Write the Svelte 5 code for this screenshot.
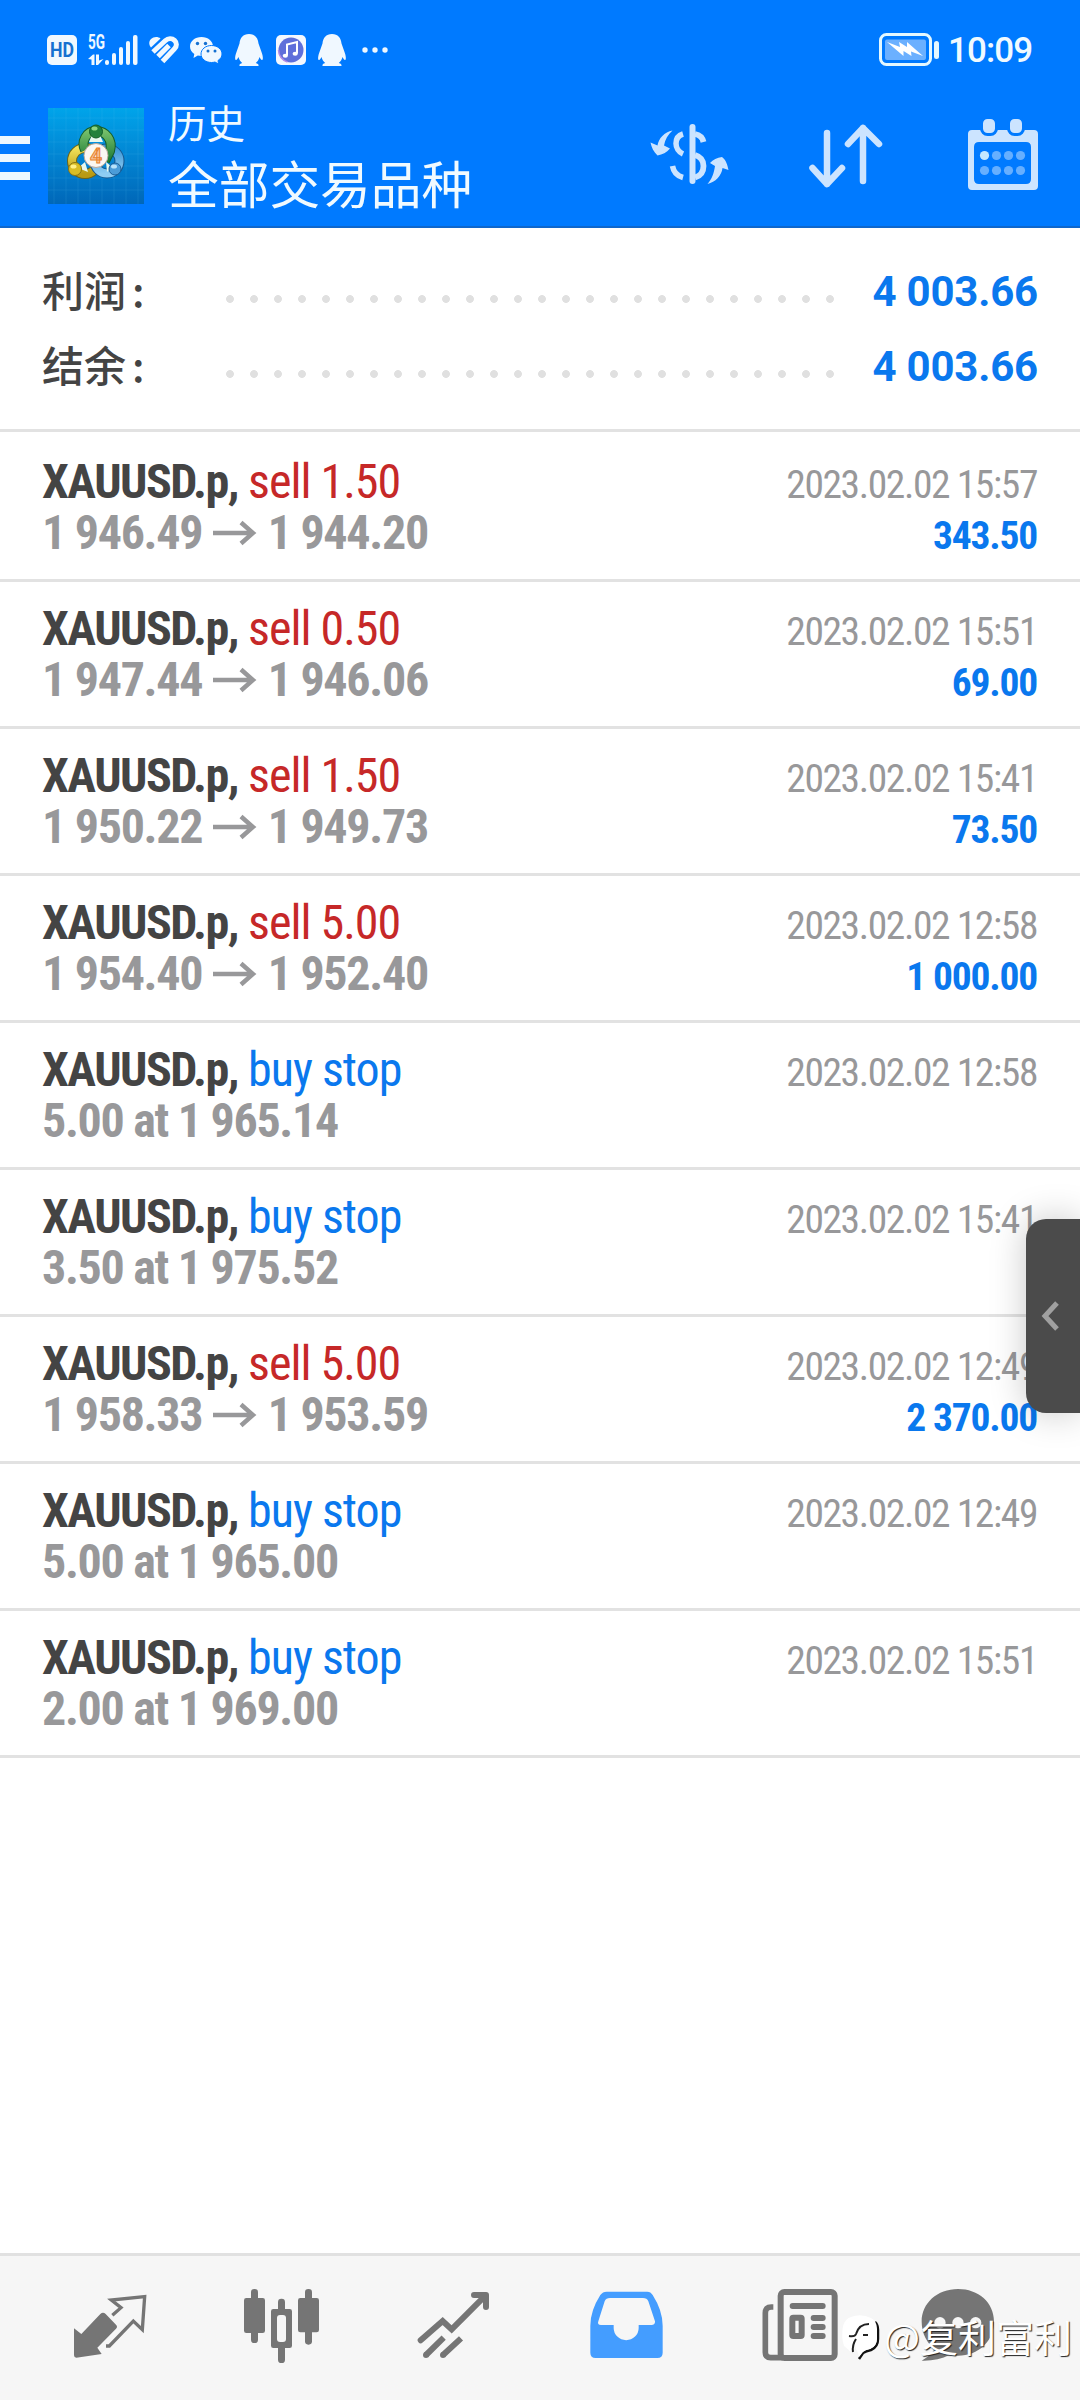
<script>
  const summary = [
    { label: '利润', value: '4 003.66' },
    { label: '结余', value: '4 003.66' }
  ];

  const deals = [
    { type: 'sell', volume: '1.50', open: '1 946.49', close: '1 944.20', time: '2023.02.02 15:57', profit: '343.50' },
    { type: 'sell', volume: '0.50', open: '1 947.44', close: '1 946.06', time: '2023.02.02 15:51', profit: '69.00' },
    { type: 'sell', volume: '1.50', open: '1 950.22', close: '1 949.73', time: '2023.02.02 15:41', profit: '73.50' },
    { type: 'sell', volume: '5.00', open: '1 954.40', close: '1 952.40', time: '2023.02.02 12:58', profit: '1 000.00' },
    { type: 'buy stop', detail: '5.00 at 1 965.14', time: '2023.02.02 12:58' },
    { type: 'buy stop', detail: '3.50 at 1 975.52', time: '2023.02.02 15:41' },
    { type: 'sell', volume: '5.00', open: '1 958.33', close: '1 953.59', time: '2023.02.02 12:49', profit: '2 370.00' },
    { type: 'buy stop', detail: '5.00 at 1 965.00', time: '2023.02.02 12:49' },
    { type: 'buy stop', detail: '2.00 at 1 969.00', time: '2023.02.02 15:51' }
  ];
</script>

{#snippet penguin()}
  <svg class="penguin" width="28" height="34" viewBox="0 0 28 34" fill="#f0f8ff">
    <path d="M14 1c-6 0-9 4-9.500 9.500L1.500 19C0 23-.3 26.500.800 27c.9.300 2-1.500 2.700-3 .6 2.500 2 4.500 3.700 6-2 .6-3 1.300-2.700 3h19c.3-1.700-.7-2.400-2.700-3 1.700-1.500 3.100-3.500 3.700-6 .7 1.500 1.800 3.300 2.700 3 1.100-.5.800-4-.7-8l-3-8.500C23 5 20 1 14 1z" />
  </svg>
{/snippet}

<div class="screen">
  <header>
    <div class="status">
      <svg class="hd" width="30" height="30" viewBox="0 0 30 30">
        <rect width="30" height="30" rx="5" fill="#f0f8ff" />
        <text x="15" y="21.500" text-anchor="middle" textLength="24" lengthAdjust="spacingAndGlyphs">HD</text>
      </svg>
      <svg class="signal" width="50" height="34" viewBox="0 0 50 34" fill="#f0f8ff">
        <text x="0" y="16" textLength="17" lengthAdjust="spacingAndGlyphs">5G</text>
        <path d="M0 26l5-4.500h1.500V32H3.500v-5.500zM8 21.500h3v6l4.500-1.500-5.500 6H8z" />
        <rect x="17" y="27" width="4" height="5" rx="2" />
        <rect x="24" y="20" width="4" height="12" rx="2" />
        <rect x="31" y="14" width="4" height="18" rx="2" />
        <rect x="38" y="8" width="4" height="24" rx="2" />
        <rect x="45" y="2" width="4.500" height="30" rx="2" />
      </svg>
      <svg class="health" width="32" height="28" viewBox="0 0 32 28" fill="none" stroke="#f0f8ff">
        <path d="M3 11.500L12.500 2.500C10 .3 5.500.5 3 3S.8 9 3 11.500z" fill="#f0f8ff" stroke="none" />
        <path d="M5 16L17.500 4.500c2.500-2.300 6.500-2.500 9-.2s2.500 6 0 8.500L14.500 25.500M10 20.500l11-11" stroke-width="5" />
      </svg>
      <svg class="wechat" width="32" height="28" viewBox="0 0 32 28">
        <path d="M11.500 1C5 1 0 5.200 0 10.500c0 3 1.700 5.800 4.300 7.500L3.500 22l4.300-2.500c1.200.3 2.400.5 3.700.5C18 20 23 15.800 23 10.500S18 1 11.500 1z" fill="#f0f8ff" />
        <path d="M21.500 9.500C15.500 9.500 11 13.300 11 18s4.500 8.500 10.500 8.500c1.200 0 2.500-.2 3.500-.5l3.500 2-.5-3.500c2.500-1.500 4-3.800 4-6.500 0-4.700-4.500-8.500-10.500-8.500z" fill="#f0f8ff" stroke="#007aff" />
        <g fill="#1670d0">
          <circle cx="7.500" cy="7.500" r="1.700" /><circle cx="15.500" cy="7.500" r="1.700" />
          <circle cx="18" cy="15" r="1.500" /><circle cx="25" cy="15" r="1.500" />
        </g>
      </svg>
      {@render penguin()}
      <svg class="music" width="30" height="30" viewBox="0 0 30 30">
        <rect width="30" height="30" rx="5" fill="#f4f8ff" />
        <circle cx="15" cy="15" r="12.500" fill="#5f6fda" />
        <path d="M2.500 15a12.500 12.500 0 0 0 9 12" fill="none" stroke="#b08be6" stroke-width="1.500" />
        <path d="M11 20.500V9.500l10-2.500v11.500" fill="none" stroke="#fff" stroke-width="2" />
        <ellipse cx="9.300" cy="20.800" rx="2.600" ry="2" fill="#fff" /><ellipse cx="19.200" cy="18.800" rx="2.600" ry="2" fill="#fff" />
      </svg>
      {@render penguin()}
      <svg class="more" width="28" height="8" viewBox="0 0 28 8" fill="#f0f8ff">
        <circle cx="4" cy="4" r="2.700" /><circle cx="14" cy="4" r="2.700" /><circle cx="24" cy="4" r="2.700" />
      </svg>
      <svg class="battery" width="62" height="34" viewBox="0 0 62 34">
        <rect x="1.500" y="1.500" width="50" height="30" rx="6" fill="none" stroke="#e4f8ff" stroke-width="3" />
        <rect x="6" y="6.500" width="41" height="20.500" rx="2" fill="#6bb0ff" />
        <path d="M8 9l13 5-1-5 8 5V9l16 14-12-4.500.5 4.500-8-5v5z" fill="#fff" />
        <rect x="55" y="8" width="5" height="18" rx="2.500" fill="#e4f8ff" />
      </svg>
      <span class="clock">10:09</span>
    </div>

    <div class="toolbar">
      <svg class="menu" width="30" height="44" viewBox="0 0 30 44" fill="#ecf8ff">
        <rect width="30" height="8" /><rect y="18" width="30" height="8" /><rect y="36" width="30" height="8" />
      </svg>
      <svg class="logo" width="96" height="96" viewBox="0 0 96 96">
        <defs>
          <linearGradient id="sky" x1="0" y1="0" x2="0" y2="1">
            <stop offset="0" stop-color="#00a4ea" /><stop offset=".5" stop-color="#0285d3" /><stop offset="1" stop-color="#0067b8" />
          </linearGradient>
          <linearGradient id="green" x1="0" y1="0" x2="0" y2="1">
            <stop offset="0" stop-color="#76c06a" /><stop offset="1" stop-color="#1d7a35" />
          </linearGradient>
          <linearGradient id="gold" x1="0" y1="0" x2="0" y2="1">
            <stop offset="0" stop-color="#f2e25a" /><stop offset="1" stop-color="#b99a12" />
          </linearGradient>
          <linearGradient id="azure" x1="0" y1="0" x2="0" y2="1">
            <stop offset="0" stop-color="#3c97d6" /><stop offset="1" stop-color="#8fcdf3" />
          </linearGradient>
        </defs>
        <rect width="96" height="96" fill="url(#sky)" />
        <path d="M6 0v96M18 0v96M30 0v96M42 0v96M54 0v96M66 0v96M78 0v96M90 0v96M0 10h96M0 22h96M0 34h96M0 46h96M0 58h96M0 70h96M0 82h96" stroke="#5cc0f0" stroke-width=".6" opacity=".25" />
        <g fill="none">
          <circle cx="37" cy="53" r="13" stroke="#6f6414" stroke-width="10" />
          <circle cx="37" cy="53" r="13" stroke="url(#gold)" stroke-width="8" />
          <circle cx="59" cy="53" r="12.500" stroke="#15568d" stroke-width="10" />
          <circle cx="59" cy="53" r="12.500" stroke="url(#azure)" stroke-width="8" />
          <path d="M37 42C33 34 38 23 48 23s17 9 14 20l-5 10" stroke="#145c28" stroke-width="10" />
          <path d="M37 42C33 34 38 23 48 23s17 9 14 20l-5 10" stroke="url(#green)" stroke-width="8" />
        </g>
        <path d="M41 34l3-7h8l3 7zM30 60l7-6 3 10zM58 54l6 5-5 5z" fill="#e8f8ee" />
        <circle cx="48" cy="23.500" r="6.500" fill="#24803c" stroke="#145c28" />
        <ellipse cx="46.500" cy="20.500" rx="3" ry="2" fill="#8fd480" />
        <circle cx="27" cy="61" r="6.500" fill="#d9bd24" stroke="#877316" />
        <ellipse cx="25.500" cy="58.500" rx="3" ry="2" fill="#fff087" />
        <circle cx="67" cy="61" r="6" fill="#4b9cd8" stroke="#1a5d96" />
        <ellipse cx="66" cy="58.500" rx="3" ry="2" fill="#b8e2fa" />
        <circle cx="48" cy="47.500" r="12" fill="#fbf7f2" stroke="#b9a79b" />
        <text x="48" y="55" text-anchor="middle">4</text>
      </svg>
      <div class="titles">
        <div class="title">历史</div>
        <div class="subtitle">全部交易品种</div>
      </div>
      <svg class="currency" width="80" height="64" viewBox="0 0 80 64" fill="none" stroke="#cce4ff">
        <path d="M23.500 8.500c-8 1.500-14 8-15 15l-7-3c1 5 3 9 7 13 5-1 9-3 12.500-7l-6-3c1-6 4-11 8.500-15zM58.500 62c8-2 14-8 15-16l6 2c-1-5-2.500-10-6.500-13-5 .5-9 2.500-12 6l5 3c-1 7-3 13-7.500 18z" fill="#cce4ff" stroke="none" />
        <path d="M43.500 5v54" stroke-width="6" stroke-linecap="round" />
        <path d="M34 12c-5 1.500-7 5.500-7 9.500s2.500 8.500 7 10.500M23.500 44c1 6 5 10 10.500 11.500" stroke-width="5.500" />
        <path d="M46 12c4.500.8 7.500 3.500 8.500 8M46 33c5 1.500 8.500 5 8.500 11S51 54 46 55.500" stroke-width="5.800" />
      </svg>
      <svg class="sort" width="76" height="68" viewBox="0 0 76 68" fill="none" stroke="#cce4ff" stroke-width="6.500" stroke-linecap="round" stroke-linejoin="round">
        <path d="M20 13v51M5.500 48L20 64l15-16M56 61V8M41 24L56 8l16 16" />
      </svg>
      <svg class="calendar" width="70" height="72" viewBox="0 0 70 72">
        <path d="M4 11h62q4 0 4 4v52q0 4-4 4H4q-4 0-4-4V15q0-4 4-4zM11 23q-5 0-5 5v32q0 5 5 5h47q5 0 5-5V28q0-5-5-5z" fill="#cce4ff" fill-rule="evenodd" />
        <g fill="#cce4ff" stroke="#007aff" stroke-width="3">
          <rect x="13.500" y="-1.500" width="15" height="17" rx="6" /><rect x="40.500" y="-1.500" width="15" height="17" rx="6" />
        </g>
        {#each [36.5, 51.5] as cy}
          {#each [16.5, 28.5, 40.5, 52.5] as cx}
            <circle {cx} {cy} r="4.600" fill={cx < 20 && cy < 40 ? '#c4e8ff' : '#66afff'} />
          {/each}
        {/each}
      </svg>
    </div>
  </header>

  <section class="summary">
    {#each summary as item}
      <div class="total">
        <span class="label">{item.label}<span class="colon">:</span></span>
        <span class="leader"></span>
        <span class="value">{item.value}</span>
      </div>
    {/each}
  </section>

  <ul class="deals">
    {#each deals as deal}
      <li>
        <div class="line">
          <span class="symbol"><b>XAUUSD.p,</b> <span class:sell={deal.type === 'sell'} class:buy={deal.type !== 'sell'}>{deal.type} {deal.volume ?? ''}</span></span>
          <span class="time">{deal.time}</span>
        </div>
        <div class="line">
          {#if deal.detail}
            <span class="price">{deal.detail}</span>
          {:else}
            <span class="price">
              {deal.open}
              <svg class="arrow" width="43" height="24" viewBox="0 0 43 24" fill="none" stroke="#98989a" stroke-width="4.500">
                <path d="M0 12h40M28 1.500L40 12 28 22.500" />
              </svg>
              {deal.close}
            </span>
            <span class="profit">{deal.profit}</span>
          {/if}
        </div>
      </li>
    {/each}
  </ul>

  <nav>
    <svg viewBox="72 48 516 432" fill="#757575">
      <path d="M222 265l22 17 57-60q8-7 16 0l31 32q6 6 0 12l-56 57 13 19-76 11q-7 0-7-7z" />
      <path d="M318 318h10l72-75 27 26 7-99-100 10 29 23-26 23" fill="none" stroke="#757575" stroke-width="10" />
    </svg>
    <svg viewBox="588 48 516 432" fill="#757575">
      <rect x="732" y="174" width="63" height="105" rx="7" /><rect x="753" y="147" width="21" height="162" rx="10" />
      <rect x="894" y="174" width="63" height="103" rx="7" /><rect x="915" y="147" width="21" height="167" rx="10" />
      <rect x="813" y="207" width="63" height="117" rx="7" /><rect x="834" y="176" width="21" height="193" rx="10" />
      <rect x="831" y="225" width="27" height="81" rx="9" fill="#f6f6f6" />
    </svg>
    <svg viewBox="24 48 516 432" fill="none" stroke="#757575" stroke-width="18">
      <path d="M182 301l66-58 27 25L376 167" stroke-linecap="round" />
      <path d="M342 165h36v36" stroke-linecap="round" stroke-linejoin="round" />
      <path d="M198 345l53-52M249 345l54-50" /><g fill="#757575" stroke="none"><circle cx="198" cy="345" r="9" /><circle cx="249" cy="345" r="9" /></g>
    </svg>
    <svg viewBox="540 48 516 432">
      <path d="M740 155h122q10 0 16 10 30 47 30 92v81q0 16-16 16H707q-16 0-16-16v-81q0-45 30-92 7-10 19-10zM750 174q-12 0-16 10l-19 60q-4 11 8 11h38v9a37 36 0 0 0 75 0v-9h38q12 0 11-11l-20-60q-4-10-16-10z" fill="#449dff" fill-rule="evenodd" />
    </svg>
    <svg viewBox="-24 48 516 432" fill="none" stroke="#757575" stroke-width="18">
      <rect x="182" y="156" width="162" height="198" rx="11" />
      <path d="M160 201h-6q-18 0-18 18v118q0 16 16 16h36" stroke-width="17" />
      <path d="M218 198h90M281 234h27M281 261h27M281 288h27" stroke-linecap="round" />
      <rect x="217" y="233" width="28" height="55" rx="3" />
    </svg>
    <svg viewBox="492 48 516 432">
      <path d="M714 147c-62 0-109 42-109 98 0 38 18 65 38 83-8 15-20 24-38 34 31 1 60-5 83-17 9 2 17 2 26 2 61 0 108-44 108-102s-47-98-108-98z" fill="#757575" />
      <g fill="#f6f6f6"><circle cx="660" cy="248" r="17" /><circle cx="714" cy="248" r="17" /><circle cx="767" cy="248" r="17" /></g>
    </svg>
  </nav>

  <div class="handle">
    <svg width="18" height="30" viewBox="0 0 18 30" fill="none" stroke="#a0a0a0" stroke-width="5">
      <path d="M16 2L4 15l12 13" />
    </svg>
  </div>

  <div class="watermark">
    <svg width="38" height="46" viewBox="0 0 38 46">
      <path d="M33 7q3 3 3 8v9q0 8-7 11-5 1-8 3l-4 6" fill="none" stroke="#111" stroke-width="2.500" />
      <path d="M9 2q10-4 20 1q6 3 6 11v10q0 7-7 10-5 1-7 3l-4 5q-1-5-3-8l-1-5-4 8-7-6Q-1 22 1 11q2-7 8-9z" fill="#fff" />
      <path d="M7 21q6 1 7-2 3-10 13-10M21 20h5M14 24q-4 6-3 13" fill="none" stroke="#222" stroke-width="2" />
    </svg>
    <span>@复利富利</span>
  </div>
</div>

<style>
  :global(body) {
    margin: 0;
    background: #fff;
  }

  .screen {
    position: relative;
    display: flex;
    flex-direction: column;
    width: 1080px;
    height: 2400px;
    overflow: hidden;
    background: #fff;
    font-family: "Roboto Condensed", Roboto, "Noto Sans CJK SC", sans-serif;
    font-stretch: 75%;
  }

  svg {
    display: block;
    flex: none;
    overflow: visible;
  }

  header {
    box-sizing: border-box;
    height: 228px;
    border-bottom: 2px solid #0f67cc;
    background: #007aff;
    color: #f0faff;
  }

  .status {
    display: flex;
    align-items: center;
    height: 100px;
    padding-left: 47px;
  }

  .hd text {
    font: bold 20px Roboto, sans-serif;
    fill: #1670d0;
  }

  .signal {
    margin-left: 11px;
  }

  .signal text {
    font: bold 20px Roboto, sans-serif;
  }

  .health {
    margin-left: 10px;
  }

  .wechat {
    margin-left: 10px;
  }

  .penguin {
    margin-left: 12.5px;
  }

  .music {
    margin-left: 13px;
  }

  .more {
    margin-left: 15px;
  }

  .battery {
    margin-left: 490px;
  }

  .clock {
    margin-left: 7px;
    font: 500 35px/1 Roboto, sans-serif;
    letter-spacing: -0.9px;
  }

  .toolbar {
    display: flex;
    align-items: flex-start;
    height: 126px;
  }

  .menu {
    margin-top: 36px;
  }

  .logo {
    margin: 8px 0 0 18px;
  }

  .logo text {
    font: bold 21px Roboto, sans-serif;
    fill: #f7c49a;
    stroke: #e8822e;
  }

  .titles {
    width: 481px;
    margin: -3px 0 0 24px;
    font-family: "Noto Sans CJK SC", sans-serif;
    font-stretch: normal;
    white-space: nowrap;
  }

  .title {
    height: 52px;
    font-size: 38.5px;
    line-height: 48px;
  }

  .subtitle {
    font-size: 50.7px;
    line-height: 66px;
  }

  .currency {
    margin: 22px 0 0 0;
  }

  .sort {
    margin: 20px 0 0 78px;
  }

  .calendar {
    margin: 19px 0 0 85px;
  }

  .summary {
    box-sizing: border-box;
    height: 204px;
    padding: 26px 42px 0 42px;
    border-bottom: 3px solid #e2e2e2;
  }

  .total {
    display: flex;
    align-items: center;
    height: 75px;
  }

  .label {
    width: 176px;
    height: 78px;
    color: #444;
    font: 500 42px/72px "Noto Sans CJK SC", sans-serif;
  }

  .colon {
    margin-left: 6px;
  }

  .leader {
    width: 624px;
    height: 24px;
    margin-top: 15px;
    background: radial-gradient(circle at center, #e0e0e0 3.5px, transparent 4.3px) 0 0 / 24px 24px;
  }

  .value {
    flex: 1;
    color: #0a78ee;
    font: bold 42px/75px Roboto, sans-serif;
    letter-spacing: -0.2px;
    text-align: right;
  }

  .deals {
    margin: 0;
    padding: 3px 0 0;
    list-style: none;
  }

  li {
    box-sizing: border-box;
    height: 147px;
    padding: 21px 43px 0 42px;
    border-bottom: 3px solid #e2e2e2;
  }

  .line {
    display: flex;
    justify-content: space-between;
    align-items: baseline;
    height: 51px;
    font-size: 48px;
    line-height: 51px;
    white-space: nowrap;
  }

  .symbol {
    color: #444;
    letter-spacing: -1px;
  }

  .symbol b {
    letter-spacing: -1.5px;
  }

  .sell {
    color: #c62828;
  }

  .buy {
    color: #0a78ee;
  }

  .price {
    color: #98989a;
    font-weight: bold;
    letter-spacing: -1.3px;
  }

  .arrow {
    display: inline-block;
    margin: 0 1.5px;
    vertical-align: 4px;
  }

  .time {
    color: #98989a;
    font-size: 39.5px;
    letter-spacing: -1.4px;
  }

  .profit {
    color: #0a78ee;
    font-size: 39.5px;
    font-weight: bold;
    letter-spacing: -1.2px;
  }

  nav {
    box-sizing: border-box;
    display: flex;
    height: 147px;
    margin-top: auto;
    padding: 0 24px;
    border-top: 3px solid #e1e1e1;
    background: #f6f6f6;
  }

  nav svg {
    width: 172px;
    height: 144px;
  }

  .handle {
    position: absolute;
    top: 1219px;
    right: 0;
    display: flex;
    align-items: center;
    box-sizing: border-box;
    width: 54px;
    height: 194px;
    padding-left: 15px;
    border-radius: 20px 0 0 20px;
    background: #4b4b4b;
    box-shadow: 0 0 36px rgba(0, 0, 0, 0.22);
  }

  .watermark {
    position: absolute;
    right: 8px;
    bottom: 39px;
    display: flex;
    align-items: center;
    gap: 4px;
    color: #fff;
    font: 38px/50px "Noto Sans CJK SC", sans-serif;
    text-shadow: 1px 1px 1px #222;
  }

  .watermark svg {
    margin-top: 5px;
  }
</style>
